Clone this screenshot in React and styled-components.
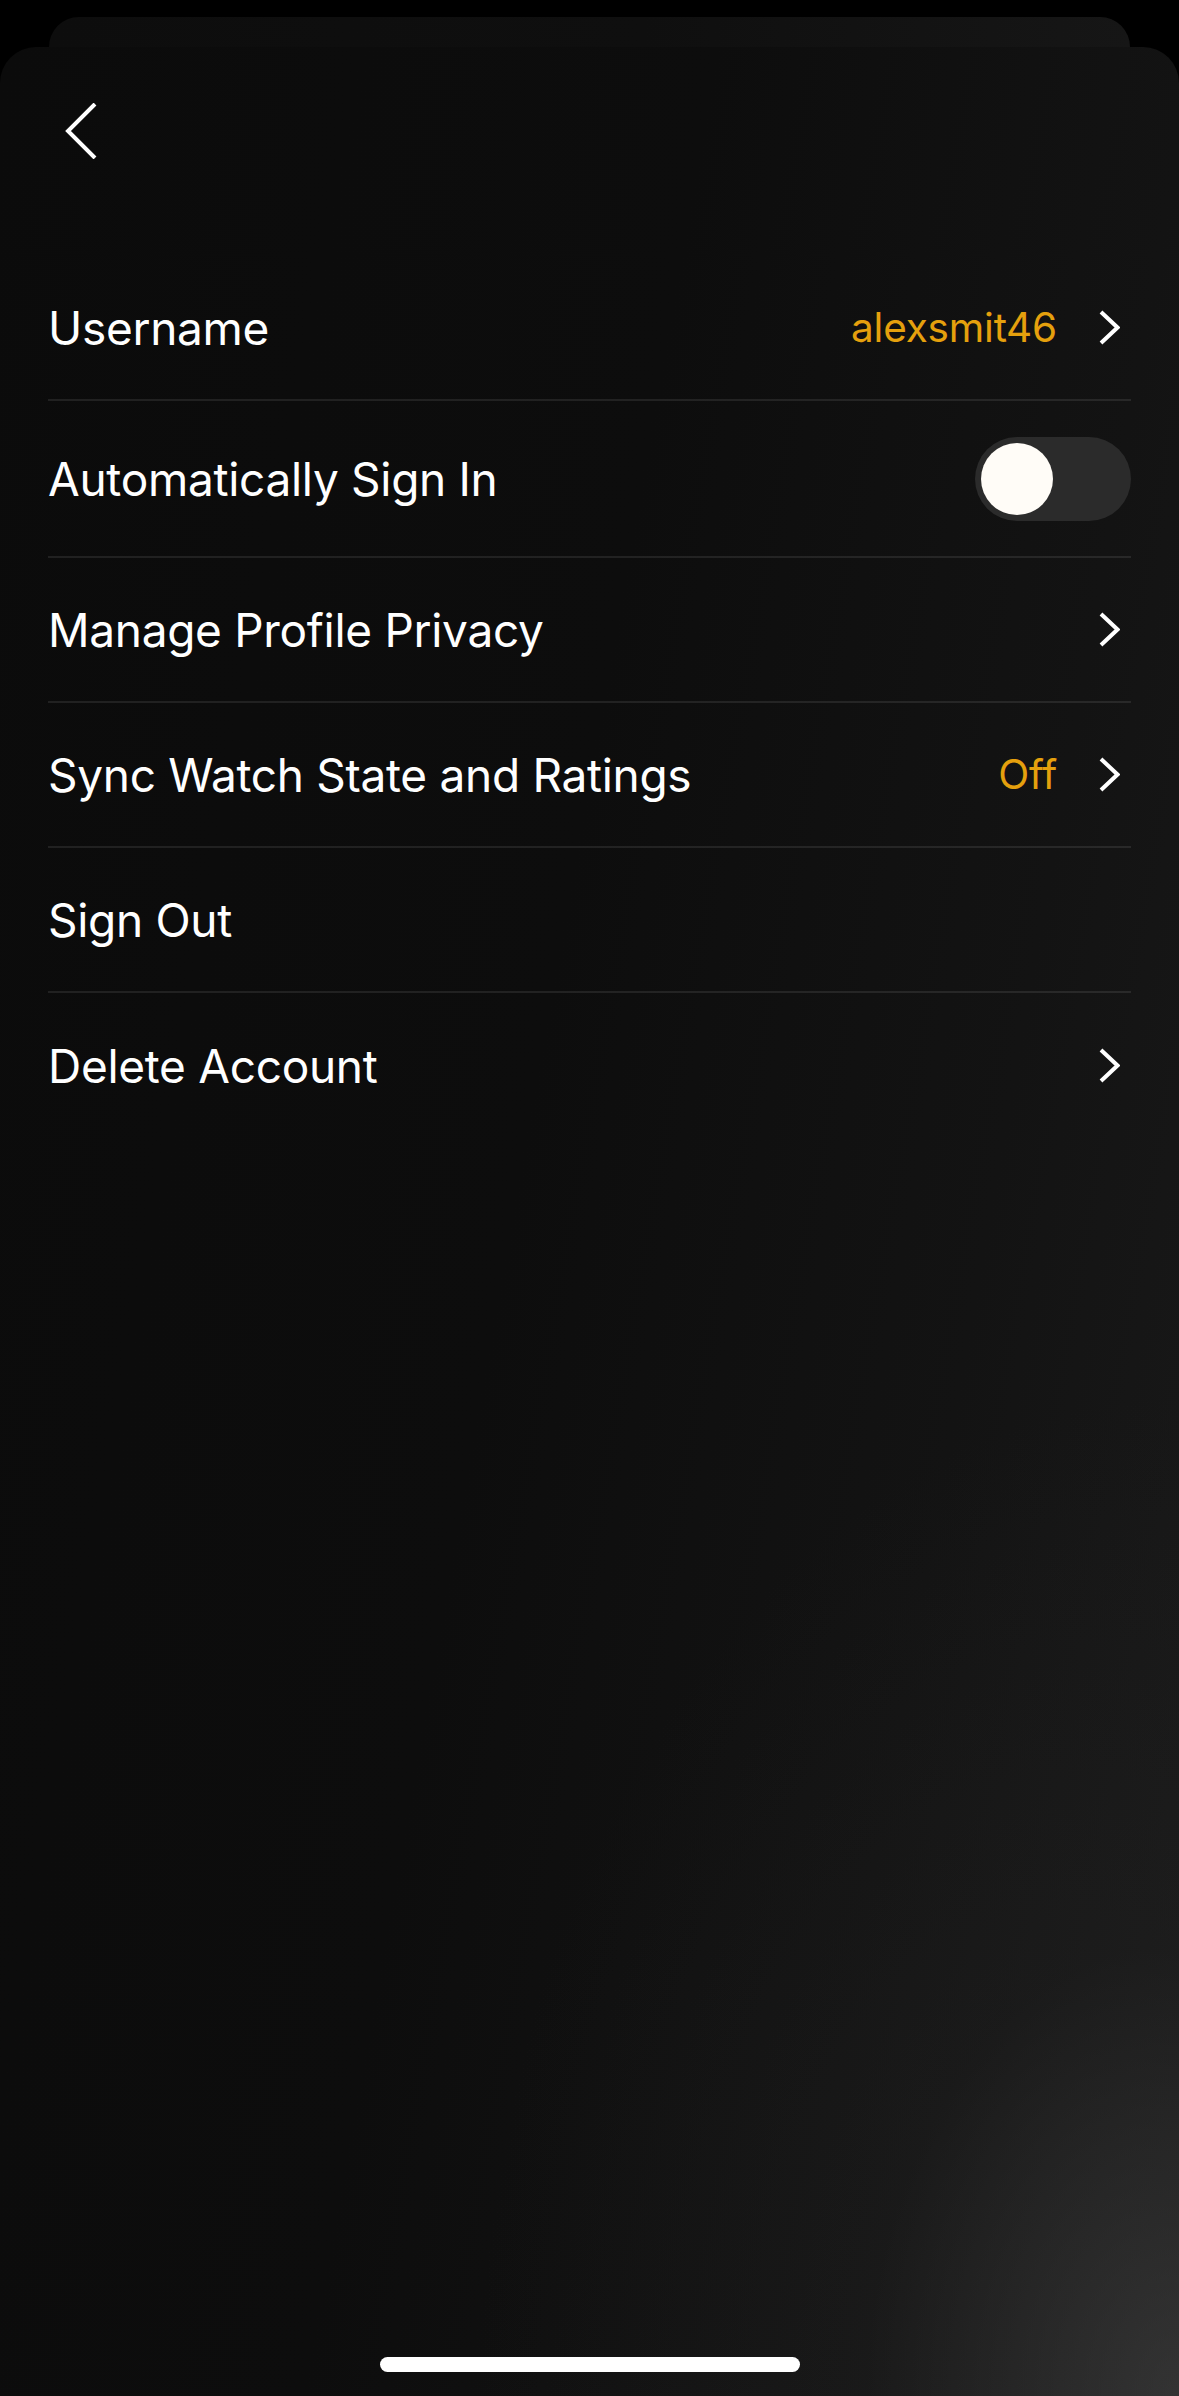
import styled, { createGlobalStyle } from 'styled-components'

const GlobalStyle = createGlobalStyle`
  html, body {
    margin: 0;
    padding: 0;
    background: #000;
  }
  body {
    font-family: Inter, "Noto Sans", sans-serif;
    -webkit-font-smoothing: antialiased;
  }
`

const Screen = styled.div`
  width: 1179px;
  height: 2396px;
  box-sizing: border-box;
  padding-top: 17px;
  display: flex;
  flex-direction: column;
  background: #000;
  overflow: hidden;
`

const BackSheet = styled.div`
  flex-shrink: 0;
  height: 30px;
  margin: 0 49px;
  border-radius: 32px 32px 0 0;
  background: linear-gradient(90deg, #0d0d0d 0%, #0f0f0f 55%, #161616 100%);
`

const Sheet = styled.main`
  flex: 1;
  display: flex;
  flex-direction: column;
  padding: 0 48px 24px;
  border-radius: 36px 36px 0 0;
  background:
    radial-gradient(ellipse 700px 1000px at 100% 100%, rgba(72, 72, 72, 0.55) 0%, rgba(40, 40, 40, 0.25) 45%, rgba(20, 20, 20, 0) 100%),
    linear-gradient(100deg, #0b0b0b 0%, #0d0d0d 45%, #131313 75%, #1a1a1a 100%);
`

const Header = styled.header`
  height: 209px;
  box-sizing: border-box;
  padding-top: 56px;
  display: flex;
  align-items: flex-start;
`

const BackButton = styled.button`
  background: none;
  border: 0;
  padding: 0 0 0 17px;
  margin: 0;
  display: flex;
  cursor: pointer;
`

const List = styled.ul`
  list-style: none;
  margin: 0;
  padding: 0;
`

const Row = styled.li`
  height: ${p => (p.$tall ? 157 : 145)}px;
  box-sizing: border-box;
  display: flex;
  align-items: center;
  border-bottom: 2px solid rgba(255, 255, 255, 0.09);
  &:last-child {
    border-bottom: 0;
  }
`

const Label = styled.span`
  flex: 1;
  color: #fff;
  font-size: 46px;
  font-weight: 400;
  letter-spacing: -0.3px;
`

const Value = styled.span`
  color: #e5a00d;
  font-size: 40.5px;
  font-weight: 400;
  letter-spacing: -0.2px;
  margin-right: 42px;
`

const Chevron = styled.svg`
  width: 21px;
  height: 35px;
  margin-right: 11px;
  flex-shrink: 0;
`

const Toggle = styled.div`
  width: 156px;
  height: 84px;
  border-radius: 42px;
  background: #2b2b2b;
  display: flex;
  align-items: center;
  padding: 0 6px;
  box-sizing: border-box;
  justify-content: ${p => (p.$on ? 'flex-end' : 'flex-start')};
`

const Knob = styled.div`
  width: 72px;
  height: 72px;
  border-radius: 50%;
  background: #fffcf7;
`

const HomeIndicator = styled.div`
  margin-top: auto;
  align-self: center;
  width: 420px;
  height: 15px;
  border-radius: 8px;
  background: #fff;
`

function ChevronRight() {
  return (
    <Chevron viewBox="0 0 21 35" fill="none">
      <polyline points="2,2 18.5,17.5 2,33" stroke="#fff" strokeWidth="4" />
    </Chevron>
  )
}

const rows = [
  { label: 'Username', value: 'alexsmit46', chevron: true },
  { label: 'Automatically Sign In', toggle: true },
  { label: 'Manage Profile Privacy', chevron: true },
  { label: 'Sync Watch State and Ratings', value: 'Off', chevron: true },
  { label: 'Sign Out' },
  { label: 'Delete Account', chevron: true },
]

export default function App() {
  return (
    <>
      <GlobalStyle />
      <Screen>
        <BackSheet />
        <Sheet>
          <Header>
            <BackButton aria-label="Back">
              <svg width="32" height="56" viewBox="0 0 32 56" fill="none">
                <polyline points="30,1 3,28 30,55" stroke="#fff" strokeWidth="4" />
              </svg>
            </BackButton>
          </Header>
          <List>
            {rows.map(r => (
              <Row key={r.label} $tall={r.toggle}>
                <Label>{r.label}</Label>
                {r.value && <Value>{r.value}</Value>}
                {r.toggle && (
                  <Toggle>
                    <Knob />
                  </Toggle>
                )}
                {r.chevron && <ChevronRight />}
              </Row>
            ))}
          </List>
          <HomeIndicator />
        </Sheet>
      </Screen>
    </>
  )
}
